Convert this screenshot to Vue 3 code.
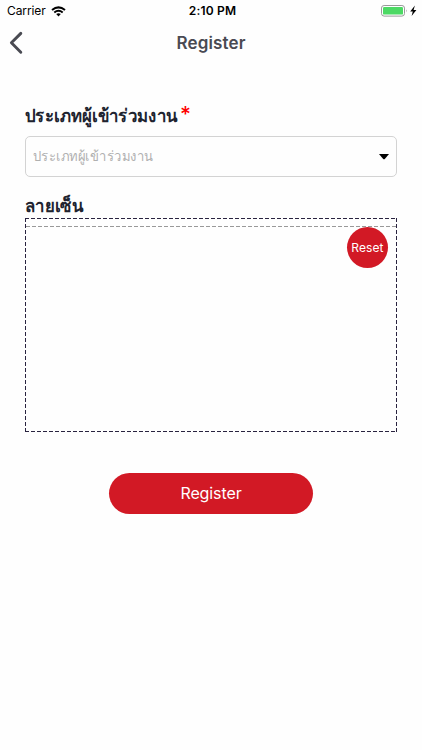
<template>
  <div class="screen">
    <div class="status-bar">
      <div class="carrier">
        <span>Carrier</span>
        <svg class="wifi" width="15" height="11" viewBox="0 0 15 11" fill="none" stroke="#000" stroke-width="2">
          <path d="M1 4Q7.5-1.3 14 4" />
          <path d="M3.3 6.5Q7.5 3.1 11.7 6.5" />
          <path d="M5.2 8.1Q7.5 6.3 9.8 8.1L7.5 10.4Z" fill="#000" stroke="none" />
        </svg>
      </div>
      <div class="time">2:10 PM</div>
      <div class="power">
        <svg width="38" height="14" viewBox="0 0 38 14">
          <rect x="1.5" y="1.5" width="23" height="10.6" rx="2.6" fill="#fff" stroke="#999" />
          <rect x="3" y="3" width="20" height="7.6" rx="1.2" fill="#4cd964" />
          <path d="M26 5.2Q27.4 6.7 26 8.3Z" fill="#999" />
          <path d="M34.9 1.6L30.2 7.4H32.8L31.6 12L36.4 6H33.6Z" fill="#000" />
        </svg>
      </div>
    </div>

    <header class="nav">
      <button class="back" aria-label="Back">
        <svg width="16" height="24" viewBox="0 0 16 24" fill="none" stroke="#494a52" stroke-width="2.9" stroke-linecap="round" stroke-linejoin="round">
          <path d="M12.8 2.4L3.4 11.8L12.8 21.2" />
        </svg>
      </button>
      <h1>Register</h1>
    </header>

    <main class="form">
      <label class="label">
        <span class="label-text">ประเภทผู้เข้าร่วมงาน</span>
        <span class="required">*</span>
      </label>
      <div class="select">
        <span class="placeholder">ประเภทผู้เข้าร่วมงาน</span>
        <svg width="10" height="6" viewBox="0 0 10 6"><path d="M0 0H10L6 4.7Q5 5.7 4 4.7Z" fill="#000" /></svg>
      </div>

      <label class="label label--sign"><span class="label-text">ลายเซ็น</span></label>
      <div class="signature">
        <div class="pad">
          <button class="reset" @click="reset">Reset</button>
        </div>
      </div>

      <button class="submit">Register</button>
    </main>
  </div>
</template>

<script setup>
import { ref } from 'vue'

const strokes = ref([])

function reset() {
  strokes.value = []
}
</script>

<style>
body { background: #fefefe; }
</style>

<style scoped>
.screen { width: 422px; height: 750px; overflow: hidden; background: #fefefe; font-family: Inter, "Noto Sans", sans-serif; color: #20232f; }
button { border: 0; padding: 0; font-family: inherit; cursor: pointer; }
svg { display: block; }

.status-bar { display: grid; grid-template-columns: 1fr auto 1fr; align-items: center; height: 22px; padding: 0 4px 0 7px; color: #000; font-size: 12px; line-height: 22px; }
.carrier { display: flex; align-items: center; gap: 5px; letter-spacing: -0.1px; }
.time { font-weight: 600; letter-spacing: 0.2px; }
.power { display: flex; justify-content: flex-end; }

.nav { display: grid; grid-template-columns: 40px 1fr 40px; align-items: center; height: 42px; }
.back { width: 16px; margin-left: 8px; background: none; }
.nav h1 { margin: 0; text-align: center; font-size: 17px; font-weight: 600; letter-spacing: 0.15px; color: #494a52; }

.form { display: flex; flex-direction: column; padding: 36px 25px 0; }
.label { display: flex; height: 36px; font-size: 18px; font-weight: 700; line-height: 32px; white-space: nowrap; }
.label-text, .placeholder { transform: scaleX(0.933); transform-origin: 0 50%; }
.required { margin-left: -8px; color: #f00; font-size: 21px; font-weight: 500; line-height: 29px; }
.select { display: flex; align-items: center; justify-content: space-between; box-sizing: border-box; height: 41px; padding: 0 7px 2px; border: 1px solid #d3d3d3; border-radius: 5px; }
.select svg { margin-top: 2px; }
.placeholder { color: #b0b0b0; font-size: 14px; white-space: nowrap; }
.label--sign { height: 28px; margin-top: 13px; }

/* 4px dash, 2px gap on every side */
.signature {
  box-sizing: border-box;
  height: 214px;
  padding: 8px 1px 1px;
  background:
    repeating-linear-gradient(90deg, #29233f 0 4px, transparent 4px 6px) 0 0 / 100% 1px no-repeat,
    repeating-linear-gradient(90deg, #29233f 0 4px, transparent 4px 6px) 0 100% / 100% 1px no-repeat,
    repeating-linear-gradient(#29233f 0 4px, transparent 4px 6px) 0 0 / 1px 100% no-repeat,
    repeating-linear-gradient(#29233f 0 4px, transparent 4px 6px) 100% 0 / 1px 100% no-repeat;
}
.pad { display: flex; justify-content: flex-end; align-items: flex-start; height: 100%; padding-right: 8px; background: repeating-linear-gradient(90deg, #999 0 4px, transparent 4px 6px) 0 0 / 100% 1px no-repeat; }
.reset { width: 41px; height: 41px; margin-top: 1px; border-radius: 50%; background: #d21925; color: #fff; font-size: 12px; letter-spacing: 0.1px; }
.submit { align-self: center; width: 204px; height: 41px; margin-top: 41px; padding-bottom: 2px; border-radius: 21px; background: #d21925; color: #fff; font-size: 16px; letter-spacing: -0.1px; }
</style>
